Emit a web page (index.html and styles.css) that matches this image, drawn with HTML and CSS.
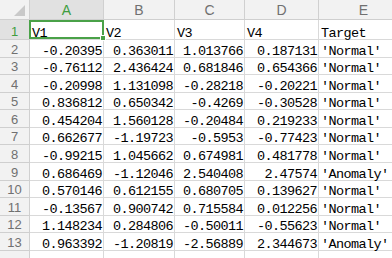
FILE: index.html
```html
<!DOCTYPE html>
<html>
<head>
<meta charset="utf-8">
<link rel="stylesheet" href="styles.css">
</head>
<body>
<div class="sheet">
  <div class="grid">
    <div class="h corner"><svg class="tri" width="12" height="12" viewBox="0 0 12 12"><polygon points="11,0 11,11 0,11" fill="#c9c9c9"/></svg></div>
    <div class="h col sel">A</div><div class="h col">B</div><div class="h col">C</div><div class="h col">D</div><div class="h col">E</div>

    <div class="h row sel">1</div><div class="c t">V1</div><div class="c t">V2</div><div class="c t">V3</div><div class="c t">V4</div><div class="c t">Target</div>
    <div class="h row">2</div><div class="c n">-0.20395</div><div class="c n">0.363011</div><div class="c n">1.013766</div><div class="c n">0.187131</div><div class="c t">'Normal'</div>
    <div class="h row">3</div><div class="c n">-0.76112</div><div class="c n">2.436424</div><div class="c n">0.681846</div><div class="c n">0.654366</div><div class="c t">'Normal'</div>
    <div class="h row">4</div><div class="c n">-0.20998</div><div class="c n">1.131098</div><div class="c n">-0.28218</div><div class="c n">-0.20221</div><div class="c t">'Normal'</div>
    <div class="h row">5</div><div class="c n">0.836812</div><div class="c n">0.650342</div><div class="c n">-0.4269</div><div class="c n">-0.30528</div><div class="c t">'Normal'</div>
    <div class="h row">6</div><div class="c n">0.454204</div><div class="c n">1.560128</div><div class="c n">-0.20484</div><div class="c n">0.219233</div><div class="c t">'Normal'</div>
    <div class="h row">7</div><div class="c n">0.662677</div><div class="c n">-1.19723</div><div class="c n">-0.5953</div><div class="c n">-0.77423</div><div class="c t">'Normal'</div>
    <div class="h row">8</div><div class="c n">-0.99215</div><div class="c n">1.045662</div><div class="c n">0.674981</div><div class="c n">0.481778</div><div class="c t">'Normal'</div>
    <div class="h row">9</div><div class="c n">0.686469</div><div class="c n">-1.12046</div><div class="c n">2.540408</div><div class="c n">2.47574</div><div class="c t">'Anomaly'</div>
    <div class="h row">10</div><div class="c n">0.570146</div><div class="c n">0.612155</div><div class="c n">0.680705</div><div class="c n">0.139627</div><div class="c t">'Normal'</div>
    <div class="h row">11</div><div class="c n">-0.13567</div><div class="c n">0.900742</div><div class="c n">0.715584</div><div class="c n">0.012256</div><div class="c t">'Normal'</div>
    <div class="h row">12</div><div class="c n">1.148234</div><div class="c n">0.284806</div><div class="c n">-0.50011</div><div class="c n">-0.55623</div><div class="c t">'Normal'</div>
    <div class="h row">13</div><div class="c n">0.963392</div><div class="c n">-1.20819</div><div class="c n">-2.56889</div><div class="c n">2.344673</div><div class="c t">'Anomaly'</div>
    <div class="h row"></div><div class="c"></div><div class="c"></div><div class="c"></div><div class="c"></div><div class="c"></div>
  </div>
  <div class="selbox"></div>
  <div class="handle"></div>
</div>
</body>
</html>
```
FILE: styles.css
```css
html, body {
  margin: 0;
  padding: 0;
  background: #ffffff;
  overflow: hidden;
}
.sheet {
  position: relative;
  width: 392px;
  height: 258px;
  overflow: hidden;
}
.grid {
  display: grid;
  grid-template-columns: 30px 74px 71px 70px 74px 90px;
  grid-template-rows: 20px 20px repeat(12, 17.58px) 30px;
  width: 409px;
}
.c {
  box-sizing: border-box;
  border-right: 1px solid #d9d9d9;
  border-bottom: 1px solid #d9d9d9;
  font-family: "Liberation Mono", monospace;
  font-size: 13.5px;
  letter-spacing: -0.6px;
  line-height: 10px;
  color: #000;
  display: flex;
  align-items: flex-end;
  white-space: nowrap;
  overflow: visible;
}
.c.n {
  justify-content: flex-end;
  padding-right: 1px;
}
.c.t {
  justify-content: flex-start;
  padding-left: 2px;
}
.h {
  box-sizing: border-box;
  background: #f2f2f2;
  border-right: 1px solid #d0d0d0;
  border-bottom: 1px solid #cfcfcf;
  color: #707070;
  display: flex;
  justify-content: center;
  font-family: "Liberation Sans", Arial, sans-serif;
}
.h.col {
  align-items: center;
  font-size: 14px;
  padding-top: 1px;
}
.h.row {
  align-items: flex-end;
  font-size: 13px;
  line-height: 12px;
  padding-bottom: 1px;
}
.h.sel {
  background: #e1e1e1;
  color: #3f9d3f;
}
.corner {
  position: relative;
  align-items: flex-end;
  justify-content: flex-end;
  padding: 0 3px 2px 0;
}
.tri {
  display: block;
}
.selbox {
  position: absolute;
  left: 29px;
  top: 20px;
  width: 75px;
  height: 19px;
  box-sizing: border-box;
  border: 2px solid #4aa148;
}
.handle {
  position: absolute;
  left: 100px;
  top: 35px;
  width: 6px;
  height: 6px;
  box-sizing: border-box;
  background: #4aa148;
  border: 1px solid #ffffff;
}
```
